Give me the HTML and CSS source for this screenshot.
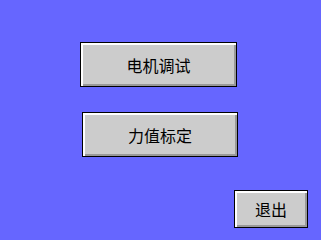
FILE: index.html
```html
<!DOCTYPE html>
<html lang="zh-CN">
<head>
<meta charset="utf-8">
<link rel="stylesheet" href="styles.css">
</head>
<body>
<div class="screen">
  <div class="btn btn-motor">电机调试</div>
  <div class="btn btn-force">力值标定</div>
  <div class="btn btn-exit">退出</div>
</div>
</body>
</html>
```
FILE: styles.css
```css
html, body {
  margin: 0;
  padding: 0;
}
body {
  width: 321px;
  height: 240px;
  background: #6666ff;
  overflow: hidden;
}
.screen {
  display: flex;
  flex-direction: column;
  align-items: flex-start;
  padding-top: 42px;
  box-sizing: border-box;
  height: 240px;
}
.btn {
  box-sizing: border-box;
  display: flex;
  align-items: center;
  justify-content: center;
  background: #cccccc;
  border: 1px solid #000;
  box-shadow: inset 2px 2px 0 #ffffff, inset -2px -2px 0 #999999;
  font-family: "Noto Sans CJK SC", "Noto Sans", sans-serif;
  font-size: 16px;
  line-height: 1;
  color: #000;
}
.btn-motor {
  margin-left: 80px;
  width: 157px;
  height: 45px;
}
.btn-force {
  margin-top: 25px;
  margin-left: 82px;
  width: 156px;
  height: 45px;
}
.btn-exit {
  margin-top: 33px;
  margin-left: 234px;
  width: 74px;
  height: 38px;
}
```
